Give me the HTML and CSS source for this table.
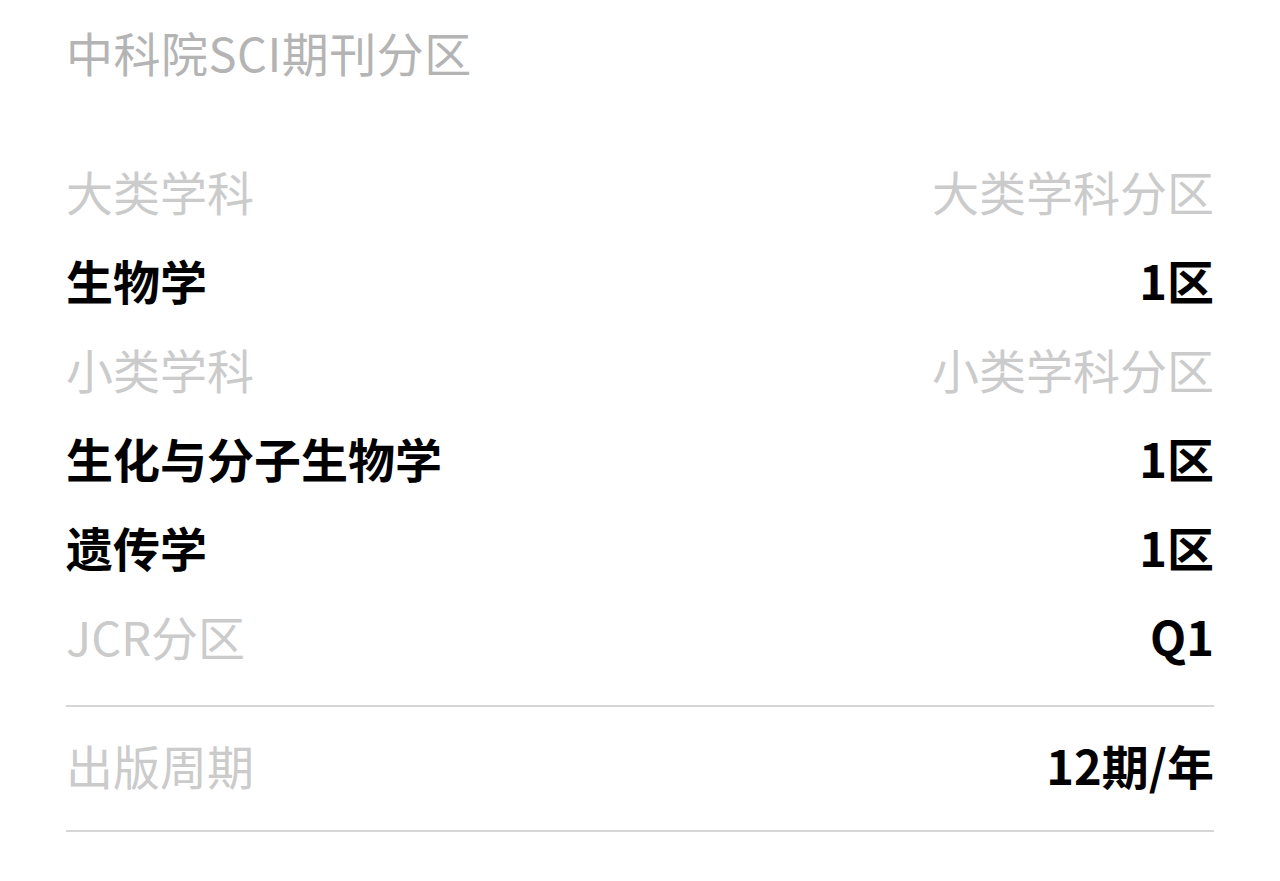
FILE: index.html
```html
<!DOCTYPE html>
<html lang="zh-CN">
<head>
    <meta charset="UTF-8">
    <meta name="viewport" content="width=device-width, initial-scale=1.0">
    <title>中科院SCI期刊分区</title>
    <link rel="stylesheet" href="styles.css">
</head>
<body>

<div class="panel">
    <h2 class="panel-title">中科院SCI期刊分区</h2>

    <div class="section">
        <div class="row">
            <span class="label">大类学科</span>
            <span class="label">大类学科分区</span>
        </div>
        <div class="row">
            <span class="value">生物学</span>
            <span class="value">1区</span>
        </div>
        <div class="row">
            <span class="label">小类学科</span>
            <span class="label">小类学科分区</span>
        </div>
        <div class="row">
            <span class="value">生化与分子生物学</span>
            <span class="value">1区</span>
        </div>
        <div class="row">
            <span class="value">遗传学</span>
            <span class="value">1区</span>
        </div>
        <div class="row">
            <span class="label">JCR分区</span>
            <span class="value">Q1</span>
        </div>
    </div>

    <div class="section section-single">
        <div class="row">
            <span class="label">出版周期</span>
            <span class="value">12期/年</span>
        </div>
    </div>
</div>

</body>
</html>
```

FILE: styles.css
```css
body {
    margin: 0;
    background-color: #ffffff;
    font-family: "Noto Sans CJK SC", "Noto Sans", sans-serif;
}

.panel {
    padding: 20px 66px 0 66px;
}

.panel-title {
    margin: 0 0 66px 0;
    font-size: 47px;
    line-height: 64px;
    font-weight: normal;
    color: #b4b4b4;
    letter-spacing: 0.5px;
}

.section {
    padding-bottom: 21px;
    border-bottom: 2px solid #d6d6d6;
}

.section-single {
    padding-top: 17px;
    padding-bottom: 17px;
}

.row {
    display: flex;
    justify-content: space-between;
    align-items: center;
    box-sizing: border-box;
    height: 89px;
    padding-bottom: 8px;
    font-size: 47px;
    line-height: 1;
}

.label {
    color: #cbcbcb;
    font-weight: normal;
}

.value {
    color: #000000;
    font-weight: bold;
}
```
